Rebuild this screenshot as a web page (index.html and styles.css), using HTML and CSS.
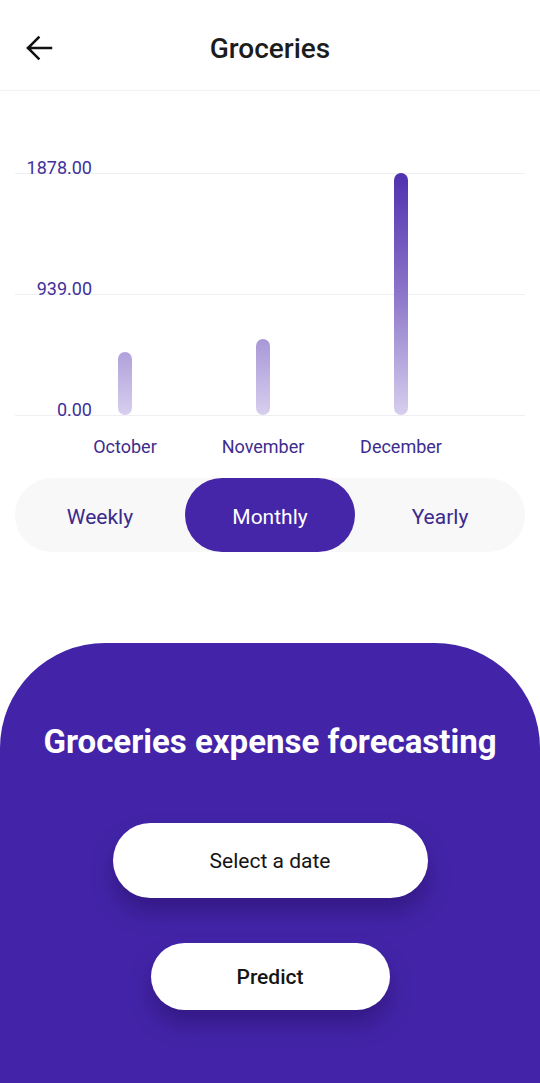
FILE: index.html
```html
<!DOCTYPE html>
<html>
<head>
<meta charset="utf-8">
<link rel="stylesheet" href="styles.css">
</head>
<body>
<div class="screen">
  <header class="topbar">
    <button class="back" aria-label="Back">
      <svg width="28" height="26" viewBox="0 0 28 26"><path d="M3 13H26M13.5 2.5L3 13L13.5 23.5" fill="none" stroke="#111" stroke-width="2.5" stroke-linecap="square" stroke-linejoin="miter"/></svg>
    </button>
    <h1 class="title">Groceries</h1>
  </header>

  <section class="chart">
    <div class="plot">
      <span class="ylab ylab-top">1878.00</span>
      <span class="ylab ylab-mid">939.00</span>
      <span class="ylab ylab-bot">0.00</span>
      <div class="bars">
        <div class="col"><div class="bar" style="height:63px"></div></div>
        <div class="col"><div class="bar" style="height:76px"></div></div>
        <div class="col"><div class="bar" style="height:242px"></div></div>
      </div>
    </div>
    <div class="months">
      <span>October</span>
      <span>November</span>
      <span>December</span>
    </div>
  </section>

  <nav class="seg">
    <span class="seg-item">Weekly</span>
    <span class="seg-item active">Monthly</span>
    <span class="seg-item">Yearly</span>
  </nav>

  <section class="panel">
    <h2 class="panel-title">Groceries expense forecasting</h2>
    <button class="btn btn-date">Select a date</button>
    <button class="btn btn-predict">Predict</button>
  </section>
</div>
</body>
</html>
```
FILE: styles.css
```css
* { box-sizing: border-box; }
html, body { margin: 0; padding: 0; background: #fff; }
body { font-family: Roboto, "Noto Sans", sans-serif; }
.screen { width: 540px; height: 1083px; overflow: hidden; display: flex; flex-direction: column; }

.topbar {
  height: 91px;
  border-bottom: 1px solid #f3f3f3;
  position: relative;
  display: flex;
  align-items: center;
  justify-content: center;
}
.back {
  position: absolute;
  left: 25px;
  top: 35px;
  border: 0; background: none; padding: 0;
  width: 28px; height: 26px;
  display: flex;
}
.title {
  margin: 0;
  margin-top: 7px;
  font-size: 28px;
  line-height: 34px;
  font-weight: 500;
  color: #1c1c1c;
}

.chart { padding-top: 82px; }
.plot {
  position: relative;
  height: 243px;
  margin: 0 15px;
  background:
    linear-gradient(#efeff3, #efeff3) 0 0 / 100% 1px no-repeat,
    linear-gradient(#efeff3, #efeff3) 0 121px / 100% 1px no-repeat,
    linear-gradient(#efeff3, #efeff3) 0 242px / 100% 1px no-repeat;
}
.ylab {
  position: absolute;
  right: calc(100% - 77px);
  font-size: 18px;
  line-height: 20px;
  color: #41309a;
}
.ylab-top { top: -15px; }
.ylab-mid { top: 106px; }
.ylab-bot { top: 227px; }

.bars {
  position: relative;
  height: 242px;
  display: flex;
  align-items: flex-end;
  padding-left: 41px;
}
.col { width: 138px; display: flex; justify-content: center; }
.bar {
  width: 14px;
  border-radius: 7px;
  background: linear-gradient(to bottom, #5030af 0%, #8c76c9 50%, #d7cfee 100%) bottom / 100% 242px no-repeat;
}

.months {
  display: flex;
  padding-left: 56px;
  margin-top: 21px;
}
.months span {
  width: 138px;
  text-align: center;
  font-size: 18px;
  line-height: 20px;
  color: #3d2c8e;
}

.seg {
  margin: 21px 15px 0;
  height: 74px;
  border-radius: 37px;
  background: #f8f8f8;
  display: flex;
}
.seg-item {
  flex: 1;
  display: flex;
  align-items: center;
  justify-content: center;
  font-size: 21px;
  color: #3b2a8c;
  border-radius: 37px;
  padding-top: 4px;
}
.seg-item.active { background: #4526a8; color: #fff; }

.panel {
  margin-top: 91px;
  flex: 1;
  background: #4324a8;
  border-radius: 105px 105px 0 0;
  display: flex;
  flex-direction: column;
  align-items: center;
  padding-top: 80px;
}
.panel-title {
  margin: 0;
  font-size: 33px;
  line-height: 38px;
  font-weight: 700;
  color: #fff;
}
.btn {
  border: 0;
  background: #fff;
  font-family: Roboto, "Noto Sans", sans-serif;
  font-size: 21px;
  color: #151515;
  box-shadow: 0 14px 22px rgba(25, 5, 70, 0.35);
  padding-top: 2px;
}
.btn-date {
  margin-top: 62px;
  width: 315px;
  height: 75px;
  border-radius: 38px;
}
.btn-predict {
  margin-top: 45px;
  width: 239px;
  height: 67px;
  border-radius: 34px;
  font-weight: 500;
}
```
